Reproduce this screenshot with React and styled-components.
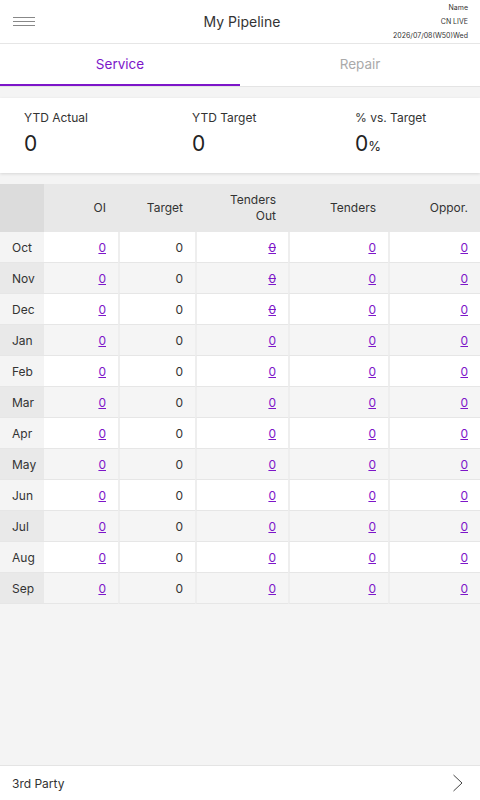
import React, { useState } from 'react'
import styled, { createGlobalStyle } from 'styled-components'

const GlobalStyle = createGlobalStyle`
  html, body {
    margin: 0;
    padding: 0;
    background: #f4f4f4;
    font-family: Inter, "Noto Sans", sans-serif;
    color: #333;
  }
`

const months = ['Oct', 'Nov', 'Dec', 'Jan', 'Feb', 'Mar', 'Apr', 'May', 'Jun', 'Jul', 'Aug', 'Sep']
const cols = ['OI', 'Target', 'Tenders Out', 'Tenders', 'Oppor.']

const App = () => {
  const [tab, setTab] = useState('Service')

  return (
    <Page>
      <GlobalStyle />
      <Header>
        <Burger>
          <span />
          <span />
          <span />
        </Burger>
        <Title>My Pipeline</Title>
        <Info>
          <div>Name</div>
          <div>CN LIVE</div>
          <div>2026/07/08(W50)Wed</div>
        </Info>
      </Header>

      <Tabs>
        {['Service', 'Repair'].map((t) => (
          <Tab key={t} active={t === tab} onClick={() => setTab(t)}>{t}</Tab>
        ))}
      </Tabs>

      <Stats>
        <Stat>
          <StatLabel>YTD Actual</StatLabel>
          <StatValue>0</StatValue>
        </Stat>
        <Stat>
          <StatLabel>YTD Target</StatLabel>
          <StatValue>0</StatValue>
        </Stat>
        <Stat>
          <StatLabel>% vs. Target</StatLabel>
          <StatValue>0<small>%</small></StatValue>
        </Stat>
      </Stats>

      <Table>
        <HeadCell corner />
        {cols.map((c) => (
          <HeadCell key={c}>{c === 'Tenders Out' ? <>Tenders<br />Out</> : c}</HeadCell>
        ))}
        {months.map((m, i) => (
          <React.Fragment key={m}>
            <MonthCell odd={i % 2 === 1}>{m}</MonthCell>
            <Cell odd={i % 2 === 1}><NumLink>0</NumLink></Cell>
            <Cell odd={i % 2 === 1}>0</Cell>
            <Cell odd={i % 2 === 1}><NumLink struck={i < 3}>0</NumLink></Cell>
            <Cell odd={i % 2 === 1}><NumLink>0</NumLink></Cell>
            <Cell odd={i % 2 === 1}><NumLink>0</NumLink></Cell>
          </React.Fragment>
        ))}
      </Table>

      <Spacer />

      <Footer>
        <span>3rd Party</span>
        <svg width="12" height="18" viewBox="0 0 12 18">
          <path d="M1.5 1 L10 9 L1.5 17" fill="none" stroke="#444" strokeWidth="1" />
        </svg>
      </Footer>
    </Page>
  )
}

const Page = styled.div`
  width: 480px;
  min-height: 800px;
  display: flex;
  flex-direction: column;
  background: #f4f4f4;
`

const Header = styled.div`
  height: 43px;
  background: #fff;
  border-bottom: 1px solid #e6e6e6;
  display: grid;
  grid-template-columns: 1fr auto 1fr;
  align-items: center;
  padding: 0 12px 0 13px;
`

const Burger = styled.div`
  width: 22px;
  display: flex;
  flex-direction: column;
  gap: 3px;
  span {
    display: block;
    height: 1px;
    background: #888;
  }
`

const Title = styled.div`
  font-size: 14px;
  color: #333;
  padding-left: 3px;
`

const Info = styled.div`
  justify-self: end;
  text-align: right;
  font-size: 7px;
  line-height: 14px;
  color: #333;
  padding-top: 1px;
`

const Tabs = styled.div`
  display: grid;
  grid-template-columns: 1fr 1fr;
  background: #fff;
  border-bottom: 1px solid #e4e4e4;
`

const Tab = styled.div`
  height: 40px;
  display: flex;
  align-items: center;
  justify-content: center;
  font-size: 13.5px;
  color: ${(p) => (p.active ? '#7d16c9' : '#aaa')};
  border-bottom: 2px solid ${(p) => (p.active ? '#7d16c9' : 'transparent')};
  cursor: pointer;
`

const Stats = styled.div`
  margin-top: 11px;
  height: 75px;
  background: #fff;
  box-shadow: 0 1px 3px rgba(0, 0, 0, 0.12);
  display: grid;
  grid-template-columns: 168px 163px 1fr;
  padding-left: 24px;
  box-sizing: border-box;
`

const Stat = styled.div`
  padding-top: 12px;
`

const StatLabel = styled.div`
  font-size: 12px;
  color: #333;
  line-height: 16px;
`

const StatValue = styled.div`
  font-size: 21px;
  color: #222;
  margin-top: 5px;
  small {
    font-size: 13px;
  }
`

const Table = styled.div`
  margin-top: 11px;
  display: grid;
  grid-template-columns: 44px 74px 77px 93px 100px 92px;
  font-size: 12px;
`

const HeadCell = styled.div`
  height: 48px;
  background: ${(p) => (p.corner ? '#dcdcdc' : '#e8e8e8')};
  display: flex;
  align-items: center;
  justify-content: flex-end;
  text-align: right;
  padding-right: 12px;
  line-height: 16px;
  color: #333;
`

const MonthCell = styled.div`
  height: 30px;
  border-bottom: 1px solid #e6e6e6;
  background: ${(p) => (p.odd ? '#e9e9e9' : '#f4f4f4')};
  display: flex;
  align-items: center;
  padding-left: 12px;
  color: #333;
`

const Cell = styled.div`
  height: 30px;
  border-bottom: 1px solid #e6e6e6;
  border-left: 2px solid #eeeeee;
  background: ${(p) => (p.odd ? '#f5f5f5' : '#fff')};
  display: flex;
  align-items: center;
  justify-content: flex-end;
  padding-right: 12px;
  color: #333;
  &:nth-child(6n + 2) {
    border-left: none;
  }
`

const NumLink = styled.a`
  color: #7d16c9;
  text-decoration: ${(p) => (p.struck ? 'underline line-through' : 'underline')};
  cursor: pointer;
`

const Spacer = styled.div`
  flex: 1;
`

const Footer = styled.div`
  height: 34px;
  background: #fff;
  border-top: 1px solid #e4e4e4;
  display: flex;
  align-items: center;
  justify-content: space-between;
  padding: 0 16px 0 12px;
  font-size: 12px;
  color: #333;
`

export default App
